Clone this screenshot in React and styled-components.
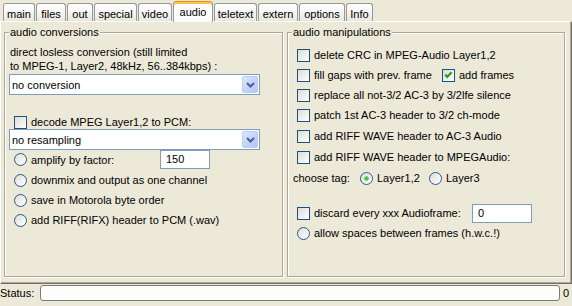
import styled, { createGlobalStyle } from "styled-components";

const GlobalStyle = createGlobalStyle`
  html, body {
    margin: 0;
    padding: 0;
    background: #ece9d8;
  }
  body {
    font-family: "Liberation Sans", Arial, sans-serif;
    font-size: 11px;
    color: #000;
  }
`;

const tabs = [
  { name: "main", w: 32 },
  { name: "files", w: 30 },
  { name: "out", w: 26 },
  { name: "special", w: 43 },
  { name: "video", w: 34 },
  { name: "audio", w: 40, active: true },
  { name: "teletext", w: 43 },
  { name: "extern", w: 40 },
  { name: "options", w: 46 },
  { name: "Info", w: 27 },
];

export default function App() {
  return (
    <>
      <GlobalStyle />
      <Window>
        <TabStrip>
          {tabs.map((t) => (
            <Tab key={t.name} $w={t.w} $active={t.active}>
              {t.name}
            </Tab>
          ))}
        </TabStrip>

        <Panel>
          <Group>
            <GroupTitle>audio conversions</GroupTitle>
            <Note>
              direct losless conversion (still limited
              <br />
              to MPEG-1, Layer2, 48kHz, 56..384kbps) :
            </Note>
            <Combo $mt={1}>
              <ComboText>no conversion</ComboText>
              <ComboButton>
                <Chevron />
              </ComboButton>
            </Combo>
            <Row $h={14} $mt={20} $indent={5}>
              <CheckBox />
              <Label>decode MPEG Layer1,2 to PCM:</Label>
            </Row>
            <Combo>
              <ComboText>no resampling</ComboText>
              <ComboButton>
                <Chevron />
              </ComboButton>
            </Combo>
            <Row $h={19} $indent={5}>
              <Radio />
              <Label $w={129}>amplify by factor:</Label>
              <Field $w={50}>150</Field>
            </Row>
            <Row $mt={1} $indent={5}>
              <Radio />
              <Label>downmix and output as one channel</Label>
            </Row>
            <Row $indent={5}>
              <Radio />
              <Label>save in Motorola byte order</Label>
            </Row>
            <Row $indent={5}>
              <Radio />
              <Label>add RIFF(RIFX) header to PCM (.wav)</Label>
            </Row>
          </Group>

          <Group $pl={5}>
            <GroupTitle>audio manipulations</GroupTitle>
            <Row $indent={4}>
              <CheckBox />
              <Label>delete CRC in MPEG-Audio Layer1,2</Label>
            </Row>
            <Row $indent={4}>
              <CheckBox />
              <Label $w={128}>fill gaps with prev. frame</Label>
              <CheckBox $checked>
                <CheckMark />
              </CheckBox>
              <Label>add frames</Label>
            </Row>
            <Row $indent={4}>
              <CheckBox />
              <Label>replace all not-3/2 AC-3 by 3/2lfe silence</Label>
            </Row>
            <Row $indent={4}>
              <CheckBox />
              <Label>patch 1st AC-3 header to 3/2 ch-mode</Label>
            </Row>
            <Row $indent={4} $mt={1}>
              <CheckBox />
              <Label>add RIFF WAVE header to AC-3 Audio</Label>
            </Row>
            <Row $indent={4} $mt={1}>
              <CheckBox />
              <Label>add RIFF WAVE header to MPEGAudio:</Label>
            </Row>
            <Row $mt={1}>
              <TagLabel>choose tag:</TagLabel>
              <Radio $checked />
              <Label $w={52}>Layer1,2</Label>
              <Radio />
              <Label>Layer3</Label>
            </Row>
            <Row $indent={4} $mt={15}>
              <CheckBox />
              <Label $w={158}>discard every xxx Audioframe:</Label>
              <Field $w={60}>0</Field>
            </Row>
            <Row $indent={4}>
              <Radio />
              <Label>allow spaces between frames (h.w.c.!)</Label>
            </Row>
          </Group>
        </Panel>

        <StatusBar>
          <StatusLabel>Status:</StatusLabel>
          <StatusField />
          <StatusCount>0</StatusCount>
        </StatusBar>
      </Window>
    </>
  );
}

function Chevron() {
  return (
    <svg width="9" height="6" viewBox="0 0 9 6">
      <path d="M1 1 L4.5 4.5 L8 1" fill="none" stroke="#4d6185" strokeWidth="2" />
    </svg>
  );
}

function CheckMark() {
  return (
    <svg width="11" height="11" viewBox="0 0 11 11">
      <path d="M2.2 4.6 L4.2 6.8 L8.6 2.2" fill="none" stroke="#21a121" strokeWidth="2.2" />
    </svg>
  );
}

const Window = styled.div`
  width: 572px;
  height: 306px;
  display: flex;
  flex-direction: column;
  background: #ece9d8;
  overflow: hidden;
`;

const TabStrip = styled.div`
  height: 21px;
  flex: none;
  display: flex;
  align-items: flex-end;
  gap: 1px;
  padding-left: 3px;
  position: relative;
  z-index: 1;
`;

const Tab = styled.div`
  width: ${({ $w }) => $w}px;
  height: ${({ $active }) => ($active ? 21 : 18)}px;
  margin-bottom: ${({ $active }) => ($active ? -1 : 0)}px;
  box-sizing: border-box;
  border: 1px solid #919b9c;
  border-bottom: none;
  border-top-color: ${({ $active }) => ($active ? "#e68b2c" : "#919b9c")};
  border-radius: 3px 3px 0 0;
  padding-top: ${({ $active }) => ($active ? 3 : 3)}px;
  line-height: 14px;
  text-align: center;
  white-space: nowrap;
  background: ${({ $active }) =>
    $active ? "#fcfcfe" : "linear-gradient(#ffffff, #f3f2ee 60%, #e8e6de)"};
  box-shadow: ${({ $active }) => ($active ? "inset 0 2px 0 #ffc73c" : "none")};
`;

const Panel = styled.div`
  height: 263px;
  flex: none;
  box-sizing: border-box;
  border-top: 1px solid #ffffff;
  border-left: 1px solid #ffffff;
  border-right: 1px solid #716f64;
  border-bottom: 1px solid #716f64;
  box-shadow: inset -1px -1px 0 #aca899;
  display: grid;
  grid-template-columns: 279px 278px;
  column-gap: 4px;
  align-items: start;
  padding: 10px 0 0 3px;
`;

const Group = styled.div`
  position: relative;
  height: 245px;
  box-sizing: border-box;
  border: 1px solid #aca899;
  box-shadow: inset 1px 1px 0 #ffffff, 1px 1px 0 #ffffff;
  padding: 12px 0 0 ${({ $pl }) => $pl || 4}px;
  display: flex;
  flex-direction: column;
`;

const GroupTitle = styled.span`
  position: absolute;
  top: -8px;
  left: 4px;
  padding: 0 1px;
  line-height: 14px;
  background: #ece9d8;
`;

const Note = styled.div`
  line-height: 14px;
  margin-left: 1px;
  white-space: nowrap;
`;

const Combo = styled.div`
  width: 251px;
  height: 21px;
  margin-top: ${({ $mt }) => $mt || 0}px;
  box-sizing: border-box;
  border: 1px solid #7f9db9;
  background: #ffffff;
  display: flex;
  align-items: center;
  justify-content: space-between;
  padding: 0 1px 0 2px;
`;

const ComboText = styled.span`
  line-height: 14px;
`;

const ComboButton = styled.div`
  width: 16px;
  height: 17px;
  box-sizing: border-box;
  border: 1px solid #bccdf7;
  border-radius: 2px;
  background: linear-gradient(135deg, #dfe8fe, #c3d4fc 50%, #b2c6f5);
  display: flex;
  align-items: center;
  justify-content: center;
`;

const Row = styled.div`
  height: ${({ $h }) => $h || 20}px;
  margin-top: ${({ $mt }) => $mt || 0}px;
  margin-left: ${({ $indent }) => $indent || 0}px;
  display: flex;
  align-items: center;
  white-space: nowrap;
`;

const CheckBox = styled.span`
  width: 13px;
  height: 13px;
  flex: none;
  box-sizing: border-box;
  border: 1px solid #1c5180;
  background: linear-gradient(135deg, #dcdcd7, #f4f4f2 70%, #ffffff);
  display: flex;
  align-items: center;
  justify-content: center;
`;

const Radio = styled.span`
  width: 13px;
  height: 13px;
  flex: none;
  box-sizing: border-box;
  border: 1px solid #2a5a8e;
  border-radius: 50%;
  background: ${({ $checked }) =>
    $checked
      ? "radial-gradient(circle at 50% 50%, #3fb935 0, #5bd054 2px, transparent 2.6px), linear-gradient(135deg, #dcdcd7, #ffffff)"
      : "linear-gradient(135deg, #dcdcd7, #f6f6f4 70%, #ffffff)"};
`;

const Label = styled.span`
  margin-left: 4px;
  line-height: 14px;
  width: ${({ $w }) => ($w ? `${$w}px` : "auto")};
  flex: none;
`;

const TagLabel = styled.span`
  width: 67px;
  flex: none;
  line-height: 14px;
`;

const Field = styled.div`
  width: ${({ $w }) => $w}px;
  height: 19px;
  box-sizing: border-box;
  border: 1px solid #7f9db9;
  background: #ffffff;
  padding-left: 5px;
  line-height: 17px;
`;

const StatusBar = styled.div`
  flex: 1;
  display: flex;
  align-items: flex-start;
  padding-top: 1px;
`;

const StatusLabel = styled.span`
  width: 40px;
  line-height: 16px;
`;

const StatusField = styled.div`
  width: 520px;
  height: 16px;
  box-sizing: border-box;
  border: 1px solid #7a7a72;
  border-radius: 3px;
  background: #fdfdfb;
`;

const StatusCount = styled.span`
  margin-left: 3px;
  line-height: 16px;
`;
